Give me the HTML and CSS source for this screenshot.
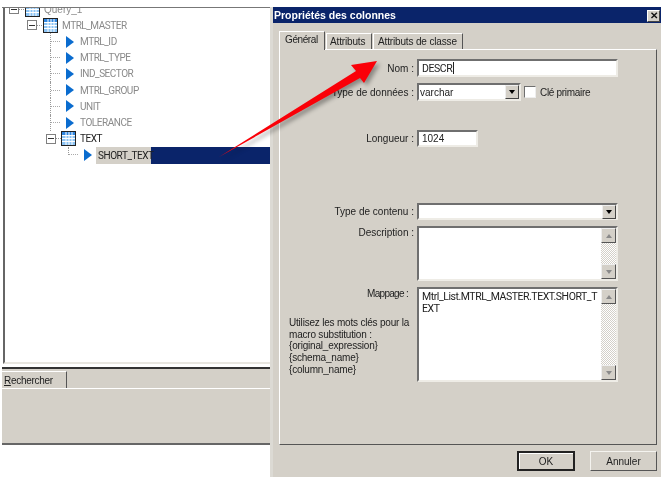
FILE: index.html
```html
<!DOCTYPE html>
<html lang="fr">
<head>
<meta charset="utf-8">
<title>Propriétés des colonnes</title>
<link rel="stylesheet" href="styles.css">
</head>
<body>
<svg width="0" height="0" class="defs">
  <defs>
    <symbol id="tbl" viewBox="0 0 15 15">
      <rect x="0.5" y="0.5" width="14" height="14" fill="#fff" stroke="#222"/>
      <rect x="1" y="1" width="13" height="3" fill="#2f86e0"/>
      <path d="M1 4h13v10H1z" fill="#8cc4f5"/>
      <path d="M1 4.5h13M1 7.5h13M1 10.5h13M5 1v13M8 1v13M11 1v13" stroke="#fff" stroke-width="1"/>
    </symbol>
    <symbol id="fld" viewBox="0 0 8 12"><polygon points="0,0 8,6 0,12" fill="#0a6ccf"/></symbol>
  </defs>
</svg>
<div class="stage">
  <section class="main">
    <div class="tree">
      <div class="row lvl0"><span class="box"></span><span class="dash"></span><svg class="ico"><use href="#tbl"/></svg><span class="lbl mute query">Query_1</span></div>
      <div class="row lvl1"><span class="box"></span><span class="dash"></span><svg class="ico"><use href="#tbl"/></svg><span class="lbl mute">MTRL_MASTER</span></div>
      <div class="row lvl2"><span class="conn"></span><svg class="arr"><use href="#fld"/></svg><span class="lbl mute">MTRL_ID</span></div>
      <div class="row lvl2"><span class="conn"></span><svg class="arr"><use href="#fld"/></svg><span class="lbl mute">MTRL_TYPE</span></div>
      <div class="row lvl2"><span class="conn"></span><svg class="arr"><use href="#fld"/></svg><span class="lbl mute">IND_SECTOR</span></div>
      <div class="row lvl2"><span class="conn"></span><svg class="arr"><use href="#fld"/></svg><span class="lbl mute">MTRL_GROUP</span></div>
      <div class="row lvl2"><span class="conn"></span><svg class="arr"><use href="#fld"/></svg><span class="lbl mute">UNIT</span></div>
      <div class="row lvl2"><span class="conn"></span><svg class="arr"><use href="#fld"/></svg><span class="lbl mute">TOLERANCE</span></div>
      <div class="row lvl1b"><span class="box"></span><span class="dash"></span><svg class="ico"><use href="#tbl"/></svg><span class="lbl">TEXT</span></div>
      <div class="row lvl3"><span class="conn last"></span><svg class="arr"><use href="#fld"/></svg><span class="lbl sel">SHORT_TEXT</span><span class="selbar"></span></div>
    </div>
    <div class="search">
      <div class="tabstrip"><span class="stab"><u>R</u>echercher</span></div>
    </div>
  </section>

  <section class="dialog">
    <header class="title"><span>Propriétés des colonnes</span><span class="close">✕</span></header>
    <div class="tabs">
      <span class="tab on">Général</span>
      <span class="tab">Attributs</span>
      <span class="tab">Attributs de classe</span>
    </div>
    <div class="panel">
      <div class="f f-nom"><label class="k">Nom :</label><div class="inp w-full cap">DESCR<i class="caret"></i></div></div>
      <div class="f f-type"><label class="k">Type de données :</label>
        <div class="inp w-sel"><span class="v">varchar</span><span class="drop"><b></b></span></div>
        <span class="chk"></span><span class="chkl">Clé primaire</span>
      </div>
      <div class="f f-len"><label class="k">Longueur :</label><div class="inp w-len">1024</div></div>
      <div class="f f-ct"><label class="k">Type de contenu :</label><div class="inp w-full"><span class="v"></span><span class="drop"><b></b></span></div></div>
      <div class="f f-desc top"><label class="k">Description :</label>
        <div class="inp w-full h-desc"><span class="v"></span>
          <div class="sb"><span class="sbtn"><b class="up"></b></span><span class="trk"></span><span class="sbtn"><b></b></span></div>
        </div>
      </div>
      <div class="f f-map top">
        <div class="k mapk">
          <div class="mapt">Mappage :</div>
          <div class="help">Utilisez les mots clés pour la macro substitution :<br>{original_expression}<br>{schema_name}<br>{column_name}</div>
        </div>
        <div class="inp w-full h-map"><span class="v wrap cap">Mtrl_List.MTRL_MASTER.TEXT.SHORT_T<br>EXT</span>
          <div class="sb"><span class="sbtn"><b class="up"></b></span><span class="trk"></span><span class="sbtn"><b></b></span></div>
        </div>
      </div>
    </div>
    <footer class="btns">
      <button class="btn def">OK</button>
      <button class="btn">Annuler</button>
    </footer>
  </section>

  <svg class="redarrow" width="663" height="477" viewBox="0 0 663 477">
    <polygon points="219,157 356,71 351,65 377,61 364,83 360,78" fill="#fa0008"/>
  </svg>
</div>
</body>
</html>
```
FILE: styles.css
```css
* { box-sizing: border-box; }
html, body { margin: 0; padding: 0; background: #fff; }
.defs { position: absolute; }
.stage {
  position: relative;
  width: 663px;
  height: 477px;
  overflow: hidden;
  background: #fff;
  font: 10px/13px "Liberation Sans", Arial, sans-serif;
  color: #222;
  filter: blur(0.35px);
}
.cap { font-family: Roboto, "Liberation Sans", sans-serif; font-size: 10.5px; letter-spacing: -0.45px; }

/* left application */
.main {
  width: 268px;
  height: 438px;
  margin: 7px 0 0 2px;
  display: flex;
  flex-direction: column;
  border-top: 1px solid #777;
}
.tree {
  height: 356px;
  margin-left: 1px;
  border-left: 2px solid #666;
  border-bottom: 2px solid #e8e6e0;
  overflow: hidden;
  background: #fff;
}
.row { height: 16.22px; display: flex; align-items: center; }
.row:first-child { margin-top: -7px; }
.lvl0 { padding-left: 4px; }
.lvl1 { padding-left: 22px; }
.lvl1b { padding-left: 41px; }
.lvl1b .dash { width: 5px; }
.lvl2 { padding-left: 45px; }
.lvl3 { padding-left: 63px; }
.box {
  flex: none;
  width: 10px; height: 10px;
  border: 1px solid #808080;
  background: linear-gradient(#333,#333) center/6px 1px no-repeat #fff;
}
.dash {
  flex: none;
  width: 6px; height: 1px;
  background: repeating-linear-gradient(90deg,#999 0 1px,transparent 1px 2px);
}
.ico { flex: none; width: 15px; height: 15px; margin-right: 4px; }
.conn {
  flex: none;
  width: 16px; height: 100%;
  border-left: 1px dotted #999;
  background: repeating-linear-gradient(90deg,#aaa 0 1px,transparent 1px 2px) left center/9px 1px no-repeat;
}
.conn.last { height: 50%; align-self: flex-start; background-position: left bottom; }
.arr { flex: none; width: 8px; height: 12px; margin-right: 6px; }
.lbl {
  font-family: Roboto, "Liberation Sans", sans-serif;
  font-size: 10px;
  letter-spacing: -0.45px;
  white-space: nowrap;
  color: #222;
}
.query { font-family: "Liberation Sans", sans-serif; letter-spacing: 0; }
.mute { color: #8a8a8a; }
.sel {
  position: relative;
  z-index: 1;
  width: 55px;
  height: 17px;
  margin-left: -2px;
  padding: 2px 0 0 2px;
  background: #d4d0c8;
  color: #222;
}
.selbar { flex: 1; height: 17px; background: #0a246a; }
.search {
  flex: 1;
  margin-top: 3px;
  border-top: 2px solid #333;
  border-bottom: 2px solid #666;
  background: #d4d0c8;
}
.tabstrip {
  height: 20px;
  padding-top: 2px;
  border-bottom: 1px solid #fff;
}
.stab {
  display: block;
  width: 65px;
  height: 17px;
  padding: 2px 0 0 2px;
  border-top: 1px solid #fff;
  border-right: 1px solid #555;
  letter-spacing: -0.3px;
  color: #222;
}

/* dialog */
.dialog {
  position: absolute;
  left: 270px;
  top: 7px;
  width: 391px;
  height: 470px;
  display: flex;
  flex-direction: column;
  background: #d4d0c8;
  border-left: 3px solid #dcdad4;
}
.title {
  flex: none;
  height: 16px;
  background: #0a246a;
  color: #fff;
  font-size: 10.5px;
  font-weight: 700;
  padding: 2px 1px 0 1px;
  display: flex;
  justify-content: space-between;
}
.close {
  width: 13px;
  height: 12px;
  margin: 1px 0 0;
  background: #d4d0c8;
  color: #111;
  border: 1px solid;
  border-color: #fff #444 #444 #fff;
  font-size: 10px;
  line-height: 10px;
  text-align: center;
}
.tabs {
  flex: none;
  height: 26px;
  padding: 8px 0 0 6px;
  display: flex;
  align-items: flex-end;
  position: relative;
  z-index: 1;
}
.tab {
  height: 16px;
  padding: 1px 0 0 3px;
  margin-right: 1px;
  border-top: 1px solid #fff;
  border-left: 1px solid #fff;
  border-right: 1px solid #555;
  letter-spacing: -0.15px;
  white-space: nowrap;
}
.tab:nth-child(2) { width: 46px; }
.tab:nth-child(3) { width: 90px; padding-left: 4px; }
.tab.on {
  width: 46px;
  height: 19px;
  margin-bottom: -1px;
  padding: 1px 0 0 5px;
  letter-spacing: -0.4px;
  background: #d4d0c8;
}
.panel {
  flex: none;
  width: 378px;
  height: 396px;
  margin-left: 6px;
  border: 1px solid;
  border-color: #fff #555 #555 #fff;
}
.f { display: flex; align-items: center; }
.f.top { align-items: flex-start; }
.f-nom { margin-top: 9px; }
.f-type { margin-top: 6px; }
.f-len { margin-top: 29px; }
.f-ct { margin-top: 56px; }
.f-desc { margin-top: 6px; }
.f-map { margin-top: 6px; }
.k {
  flex: none;
  width: 137px;
  padding-right: 3px;
  text-align: right;
  white-space: nowrap;
}
.mapk { text-align: left; padding: 0; }
.mapt { text-align: right; padding-right: 9px; margin-bottom: 17px; letter-spacing: -0.7px; }
.help { width: 128px; margin-left: 9px; line-height: 11.7px; letter-spacing: -0.2px; white-space: normal; color: #222; }
.inp {
  flex: none;
  display: flex;
  align-items: center;
  height: 18px;
  padding-left: 3px;
  background: #fff;
  border: 2px solid;
  border-color: #6f6f6f #eeece6 #eeece6 #6f6f6f;
}
.w-full { width: 201px; }
.w-sel { width: 104px; padding-right: 0; padding-left: 1px; }
.w-len { width: 61px; height: 17px; }
.f-ct .inp { height: 17px; padding-left: 0; }
.h-desc { height: 55px; }
.h-map { height: 95px; }
.h-desc, .h-map { align-items: stretch; padding-left: 0; }
.caret { display: inline-block; width: 1px; height: 12px; background: #222; margin-left: 1px; }
.v { flex: 1; min-width: 0; }
.wrap { padding: 2px 0 0 3px; white-space: nowrap; line-height: 12px; }
.drop {
  flex: none;
  width: 14px;
  height: 14px;
  display: flex;
  align-items: center;
  justify-content: center;
  background: #d4d0c8;
  border: 1px solid;
  border-color: #eee #444 #444 #eee;
}
.drop b {
  width: 0; height: 0;
  border: 3.5px solid transparent;
  border-top: 4px solid #000;
  border-bottom: 0;
}
.chk {
  flex: none;
  width: 12px; height: 12px;
  margin-left: 3px;
  background: #fff;
  border: 1px solid;
  border-color: #6f6f6f #eee #eee #6f6f6f;
}
.chkl { margin-left: 4px; letter-spacing: -0.3px; white-space: nowrap; }
.sb {
  flex: none;
  width: 15px;
  display: flex;
  flex-direction: column;
}
.sbtn {
  flex: none;
  height: 15px;
  display: flex;
  align-items: center;
  justify-content: center;
  background: #d4d0c8;
  border: 1px solid;
  border-color: #eee #555 #555 #eee;
}
.sbtn b {
  width: 0; height: 0;
  border: 3.5px solid transparent;
  border-top: 4px solid #8a8a8a;
  border-bottom: 0;
}
.sbtn b.up { border-top: 0; border-bottom: 4px solid #8a8a8a; }
.trk { flex: 1; background: repeating-conic-gradient(#d4d0c8 0 25%, #fff 0 50%) 0 0/2px 2px; }

.btns {
  flex: none;
  display: flex;
  justify-content: flex-end;
  gap: 15px;
  padding: 6px 4px 0 0;
}
.btn {
  width: 58px;
  height: 20px;
  padding: 0;
  background: #d4d0c8;
  font: inherit;
  color: #222;
  border: 1px solid;
  border-color: #f4f3ef #555 #555 #f4f3ef;
}
.btn + .btn { width: 67px; }
.btn.def { border: 2px solid #222; box-shadow: inset 1px 1px 0 #fff; }

.redarrow {
  position: absolute;
  left: 0;
  top: 0;
  pointer-events: none;
  filter: drop-shadow(3px 3px 2px rgba(0,0,0,.35));
}
```
